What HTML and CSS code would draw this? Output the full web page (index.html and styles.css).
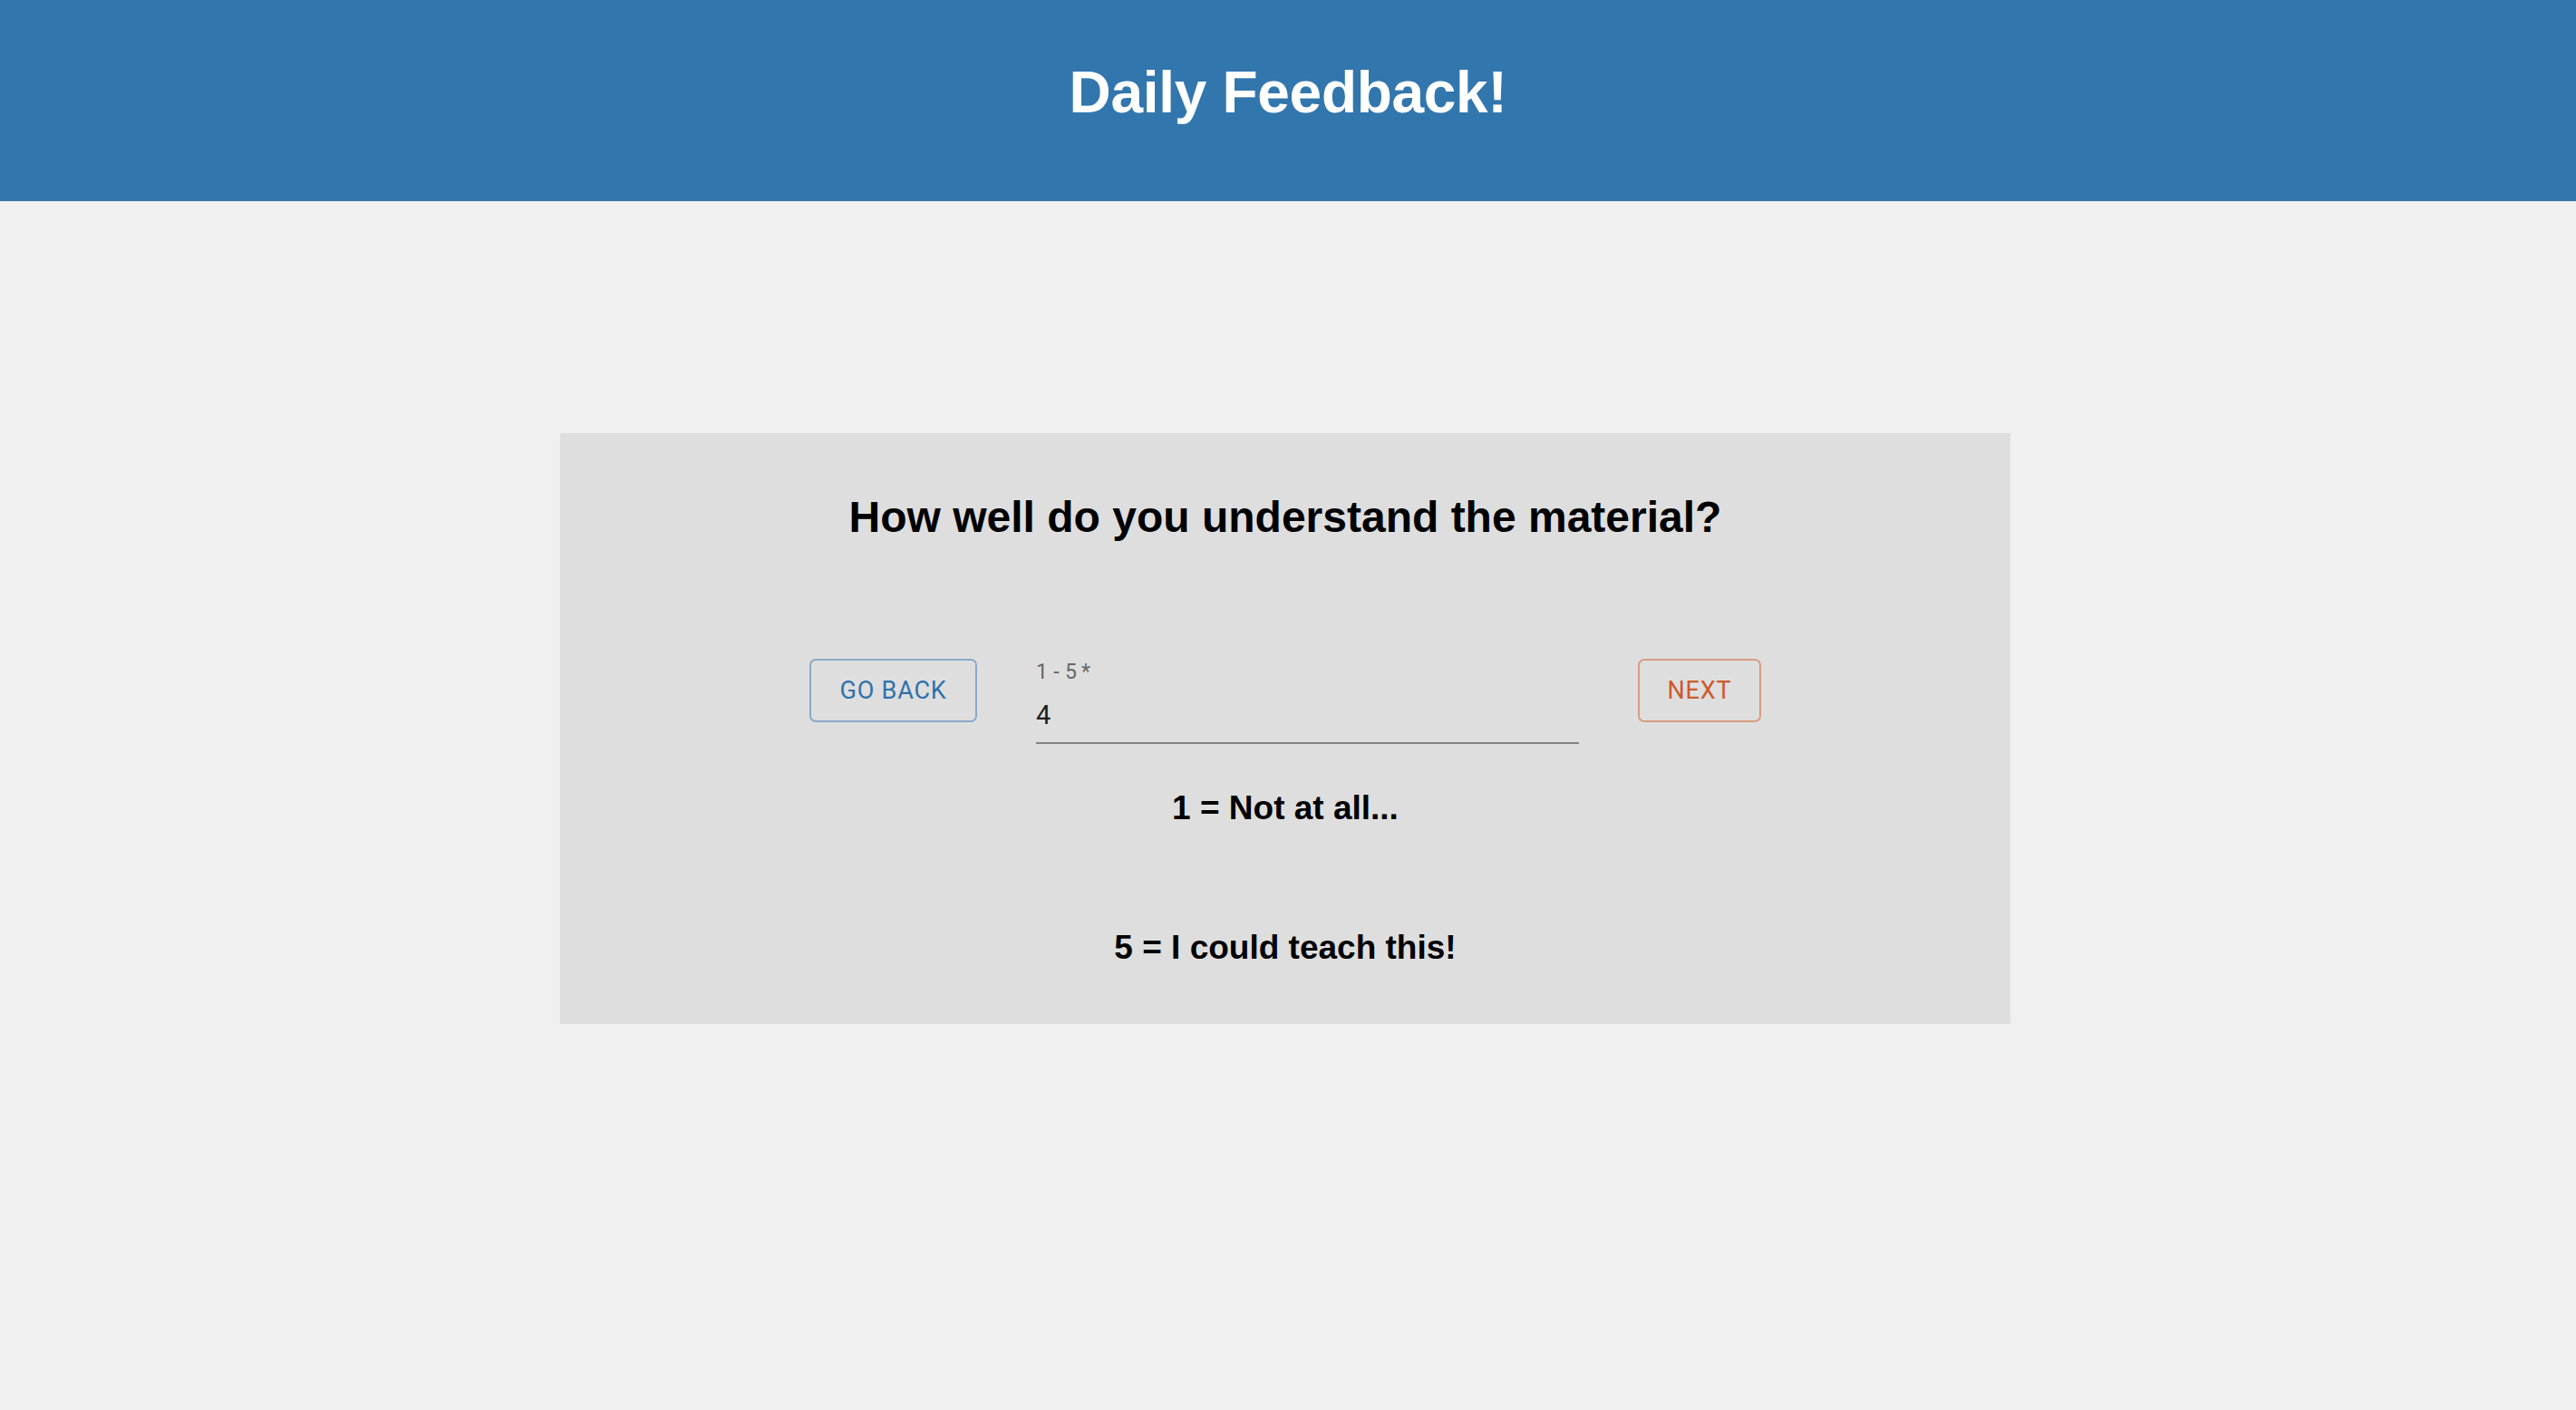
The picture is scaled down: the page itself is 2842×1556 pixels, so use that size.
FILE: index.html
```html
<!DOCTYPE html>
<html lang="en">
<head>
<meta charset="utf-8">
<title>Daily Feedback!</title>
<link rel="stylesheet" href="styles.css">
</head>
<body>
<header class="topbar">
  <h1 class="topbar-title">Daily Feedback!</h1>
</header>
<main class="page">
  <section class="card">
    <h2 class="question">How well do you understand the material?</h2>
    <div class="controls">
      <button class="btn btn-back" type="button">GO BACK</button>
      <div class="field">
        <div class="field-label">1 - 5&thinsp;*</div>
        <div class="field-value">4</div>
      </div>
      <button class="btn btn-next" type="button">NEXT</button>
    </div>
    <p class="hint hint-low">1 = Not at all...</p>
    <p class="hint hint-high">5 = I could teach this!</p>
  </section>
</main>
</body>
</html>
```
FILE: styles.css
```css
html, body {
  margin: 0;
  padding: 0;
}
body {
  background: #f0f0f0;
  font-family: "Liberation Sans", Arial, Helvetica, sans-serif;
  min-height: 1556px;
}
.topbar {
  background: #3276ae;
  height: 222px;
  box-sizing: border-box;
  padding-top: 66px;
  display: flex;
  justify-content: center;
  align-items: flex-start;
}
.topbar-title {
  margin: 0;
  color: #ffffff;
  font-size: 64px;
  font-weight: 700;
  line-height: 1.149;
  letter-spacing: -0.3px;
}
.page {
  display: flex;
  justify-content: center;
  padding: 256px 6px 0 0;
}
.card {
  width: 1600px;
  height: 652px;
  box-sizing: border-box;
  background: #dedede;
  display: flex;
  flex-direction: column;
  align-items: center;
  padding-top: 65px;
}
.question {
  margin: 0;
  font-size: 48px;
  font-weight: 700;
  line-height: 1.149;
  color: #000;
}
.controls {
  margin-top: 129px;
  display: flex;
  align-items: flex-start;
  gap: 65px;
}
.btn {
  height: 70px;
  box-sizing: border-box;
  border-radius: 7px;
  background: transparent;
  font-family: Roboto, "Liberation Sans", sans-serif;
  font-size: 27px;
  font-weight: 400;
  line-height: 1;
  letter-spacing: 0.8px;
  display: flex;
  align-items: center;
  justify-content: center;
  cursor: pointer;
}
.btn-back {
  width: 185px;
  color: #2f71aa;
  border: 2px solid #89a9c6;
}
.btn-next {
  width: 136px;
  color: #cc5a2a;
  border: 2px solid #d79b83;
}
.field {
  width: 599px;
  display: flex;
  flex-direction: column;
  align-items: flex-start;
  font-family: Roboto, "Liberation Sans", sans-serif;
  border-bottom: 2px solid #838383;
  padding-bottom: 15px;
}
.field-label {
  margin-top: 3px;
  font-size: 23px;
  line-height: 1;
  color: #676767;
  letter-spacing: 0.3px;
}
.field-value {
  margin-top: 22px;
  font-size: 29px;
  line-height: 1;
  color: #1c1c1c;
}
.hint {
  margin: 0;
  font-size: 37px;
  font-weight: 700;
  line-height: 1.149;
  color: #000;
}
.hint-low {
  margin-top: 50px;
}
.hint-high {
  margin-top: 111px;
}
```
